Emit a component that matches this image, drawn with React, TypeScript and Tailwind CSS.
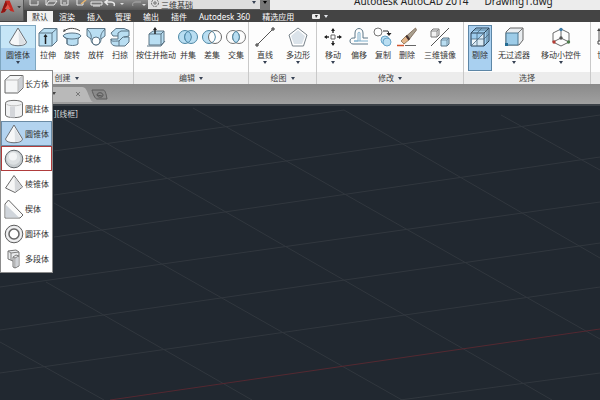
import type { ReactNode } from "react";

const EDGE = "#5b7485";
const BLUE = "#b9def2";

const Svg = ({ children }: { children: ReactNode }) => (
  <svg viewBox="0 0 20 20" className="h-5 w-5 shrink-0" fill="none" strokeWidth="1" strokeLinejoin="round">
    {children}
  </svg>
);

const Caret = ({ className = "text-gray-700" }: { className?: string }) => (
  <svg viewBox="0 0 4 3" className={`h-[3px] w-1 shrink-0 ${className}`} fill="currentColor">
    <path d="M0 0h4L2 3z" />
  </svg>
);

/* solids */
const ConeIcon = () => (
  <Svg>
    <path d="M10 1 1.500 15c0 5 17 5 17 0z" fill="#f6f7f8" stroke="#6a6f75" />
    <path d="M10.500 4 11 18c3.500 0 6-1.200 6.500-2.500z" fill="#dde1e5" />
  </Svg>
);
const BoxIcon = () => (
  <Svg>
    <path d="M1 6 6 1.500h13V14l-5 5H1z" fill="#f4f5f6" stroke="#666" />
    <path d="M14 6.500 18.500 2v12L14 18.500z" fill="#cdd0d5" />
    <path d="M1.500 6H14v12.500M14 6l4.500-4" stroke="#bbb" />
  </Svg>
);
const CylinderIcon = () => (
  <Svg>
    <path d="M1.500 4c0-3.500 17-3.500 17 0v12c0 3.500-17 3.500-17 0z" fill="#f1f2f3" stroke="#6d6d6d" />
    <path d="M6 7.500h5v11H6z" fill="#d4d6da" />
    <path d="M2 4.500c1 3 15 3 16 0" stroke="#c2c2c2" />
  </Svg>
);
const SphereIcon = () => (
  <Svg>
    <circle cx="10" cy="10" r="8.800" fill="#c7cccf" stroke="#62686c" />
    <circle cx="9.500" cy="9" r="6.800" fill="#dde1e3" />
    <circle cx="9" cy="7.500" r="4" fill="#f3f5f6" />
  </Svg>
);
const PyramidIcon = () => (
  <Svg>
    <path d="M10 1.500 1.500 14 11 18.500l7.500-5.500z" fill="#f6f6f6" stroke="#6a6a6a" />
    <path d="M10.500 3 11 18l7-5z" fill="#d5d7da" />
  </Svg>
);
const WedgeIcon = () => (
  <Svg>
    <path d="M1 5 4.500 1 19 16l-3 3H1z" fill="#fafafa" stroke="#666" />
    <path d="M1.500 5.500 15 18.500H1.500z" fill="#d0d5db" />
  </Svg>
);
const TorusIcon = () => (
  <Svg>
    <circle cx="10" cy="10" r="8.800" fill="#e5e6e8" stroke="#5e5e5e" />
    <circle cx="10" cy="10" r="5" fill="#fff" stroke="#666" strokeWidth="1.500" />
    <circle cx="10" cy="10" r="7" stroke="#f6f6f6" />
  </Svg>
);
const PolysolidIcon = () => (
  <Svg>
    <path d="m4 2 8-1 3 2v14l-4 2-2-1v-6l-5-2z" fill="#e9ebec" stroke="#777" />
    <path d="m4 2 3 2v7M7 4l8-1M9 12V8l3-2 3 1M11 19V9L9 8M11 9l4-2" stroke="#808080" />
    <path d="m11.500 9.500 3-1.500v8.500l-3 1.500z" fill="#cfd2d6" />
  </Svg>
);

/* ribbon tools */
const ExtrudeIcon = () => (
  <Svg>
    <path d="M1 6 6 1.500h13V14l-5 5H1z" fill={BLUE} stroke={EDGE} />
    <path d="M1 6h13v13M14 6l5-4.500" stroke={EDGE} />
    <path d="M7.500 17V8" stroke="#222" strokeWidth="1.500" />
    <path d="M5.500 10h4l-2-3z" fill="#222" />
  </Svg>
);
const RevolveIcon = () => (
  <Svg>
    <path d="M1 9c1-4 17-4 18 0l-3 3v5c-2 2-9 2-11 0v-5z" fill={BLUE} stroke={EDGE} />
    <path d="M1 9c2 4 16 4 18 0M5 12v5" stroke={EDGE} />
    <path d="M2 4C7 0 14 1 18 4" stroke="#444" />
    <path d="m1 5 1-3 2 2z" fill="#444" />
  </Svg>
);
const LoftIcon = () => (
  <Svg>
    <path d="M1 1.500h18V9l-4 3c0 8-10 8-10 0L1 9z" fill={BLUE} stroke={EDGE} />
    <path d="M1 2c3 3 5 6 4 10M19 2c-3 3-5 6-4 10" stroke={EDGE} />
    <circle cx="10" cy="14" r="4" fill="#fff" stroke={EDGE} />
  </Svg>
);
const SweepIcon = () => (
  <Svg>
    <path d="M6 1.500h8l5 2V9l-5 1h5v5l-4 4H6c-3 0-5-2-5-4v-3h7V9H3L1 6z" fill={BLUE} stroke={EDGE} />
    <path d="M8 9V6l3-2h8M1 12c0 3 3 2 8 2v5M9 14l4-4h1" stroke={EDGE} />
  </Svg>
);
const PressPullIcon = () => (
  <Svg>
    <path d="m3 7 4-3h11v11l-3 3H3z" fill={BLUE} stroke={EDGE} />
    <path d="M3 7h12v11M15 7l3-3M1 19h14l4-5" stroke={EDGE} />
    <path d="M9 7V2" stroke="#222" strokeWidth="1.500" />
    <path d="M7 3h4L9 0z" fill="#222" />
  </Svg>
);
const UnionIcon = () => (
  <Svg>
    <circle cx="7" cy="10" r="6.500" fill={BLUE} stroke="#4e87a4" />
    <circle cx="13" cy="10" r="6.500" fill={BLUE} stroke="#4e87a4" />
    <path d="M10 4.300a6.500 6.500 0 0 1 0 11.400a6.500 6.500 0 0 1 0-11.400z" fill="#a4d2ec" stroke="#4e87a4" />
  </Svg>
);
const SubtractIcon = () => (
  <Svg>
    <circle cx="7" cy="10" r="6.500" fill={BLUE} stroke="#4e87a4" />
    <circle cx="13" cy="10" r="6.500" fill="#fff" stroke="#666" />
    <path d="M10 4.300a6.500 6.500 0 0 1 0 11.400" stroke="#4e87a4" />
  </Svg>
);
const IntersectIcon = () => (
  <Svg>
    <circle cx="7" cy="10" r="6.500" stroke="#777" />
    <circle cx="13" cy="10" r="6.500" stroke="#777" />
    <path d="M10 4.300a6.500 6.500 0 0 1 0 11.400a6.500 6.500 0 0 1 0-11.400z" fill={BLUE} stroke="#4e87a4" />
  </Svg>
);
const LineIcon = () => (
  <Svg>
    <path d="M2 18 18 2" stroke="#555" />
    <path d="M1 17h2v2H1zM17 1h2v2h-2z" fill="#fff" stroke="#333" />
  </Svg>
);
const PolygonIcon = () => (
  <Svg>
    <path d="m10 1 9 7-3.500 11h-11L1 8z" fill="#fff" stroke="#78828a" />
    <path d="m10 3 7 6-3 8H6L3 9z" fill="#dbe3ea" />
  </Svg>
);
const MoveIcon = () => (
  <Svg>
    <path d="M8 8h4v4H8z" fill="#fff" stroke="#666" />
    <path d="M10 2v4M10 14v4M2 10h4M14 10h4" stroke="#333" strokeWidth="1.500" />
    <path d="m8 4 2-3 2 3zM8 16l2 3 2-3zM4 8l-3 2 3 2zM16 8l3 2-3 2z" fill="#222" />
  </Svg>
);
const OffsetIcon = () => (
  <Svg>
    <path d="M19 17H4c-4 0-4-6 0-6h2V6c0-6 8-6 8 0v5h5" stroke="#5d7787" />
    <path d="M19 14H5h4V6c0-1 2-1 2 0v8" stroke="#7fb0cd" />
  </Svg>
);
const CopyIcon = () => (
  <Svg>
    <circle cx="5" cy="5" r="4" fill="#fff" stroke="#777" />
    <circle cx="12" cy="13" r="4" fill={BLUE} stroke="#69a5c9" />
    <circle cx="14" cy="15" r="4" fill={BLUE} stroke="#69a5c9" />
    <path d="M10 4h5l1 3" stroke="#333" />
    <path d="M13.500 6h5L16 9z" fill="#222" />
  </Svg>
);
const EraseIcon = () => (
  <Svg>
    <path d="m18.500 1-9 8 3 3 7-9z" fill="#a9a08f" stroke="#6b5340" strokeWidth=".7" />
    <path d="m10 8-6 6 3 3 6-5z" fill="#e3b58a" stroke="#77603f" strokeWidth=".7" />
    <path d="m8.500 9.500 3 4 1.500-1.500-3-4z" fill="#433" />
    <path d="M0 18.500h7" stroke="#d2552f" strokeWidth="1.500" />
    <path d="M8 18.500h11" stroke="#666" />
  </Svg>
);
const MirrorIcon = () => (
  <Svg>
    <path d="m1 4 2-2h6v6L7 10H1z" fill="#f1f1f1" stroke="#777" />
    <path d="M1 4h6v6M7 4l2-2" stroke="#888" />
    <path d="m11 13 2-2h6v6l-2 2h-6z" fill={BLUE} stroke={EDGE} />
    <path d="M11 13h6v6M17 13l2-2" stroke={EDGE} strokeWidth=".7" />
    <path d="M19 1 1 19" stroke="#555" />
  </Svg>
);
const CullIcon = () => (
  <Svg>
    <path d="M1 6 6 1h13v13l-5 5H1z" fill="#9ecdee" />
    <path d="M2 12h11v6H2z" fill="#f0f7fb" />
    <path d="M1 19 14 6v13z" fill="#dbeaf4" />
    <path d="M1 6 6 1h13v13l-5 5H1zM1 6h13v13M14 6l5-5" stroke="#2c4356" />
    <path d="M7 6v13M7 6l5-5M1 12h13l5-5M4 3h13v13M1 19 14 6" stroke="#47677e" strokeWidth=".8" />
  </Svg>
);
const FilterIcon = () => (
  <Svg>
    <path d="M2 5 6 1h13v12l-4 5H2z" fill="#e9edf0" stroke="#666" />
    <path d="M2 6h12v12H2z" fill="#9dcce8" stroke="#4c7892" />
    <path d="m14 6 5-5" stroke="#777" />
    <path d="M1 16h3v3H1z" fill="#246c93" />
  </Svg>
);
const GizmoIcon = () => (
  <Svg>
    <path d="m10 2 8 4v9l-8 4-8-4V6zM10 2v9l-8 4M10 11l8 4" stroke="#6b6b6b" />
    <circle cx="10" cy="2.500" r="1.700" fill="#3d7ca8" />
    <circle cx="10" cy="11" r="1.700" fill="#555" />
    <circle cx="3" cy="15" r="1.700" fill="#b33b34" />
    <circle cx="17.500" cy="15" r="1.700" fill="#4c7b4b" />
  </Svg>
);
const UcsIcon = () => (
  <Svg>
    <path d="M4 3v12h12M4 15l8-8" stroke="#555" />
    <path d="M2 4h4L4 1z" fill="#444" />
    <path d="M3 14h3v3H3z" fill="#fff" stroke="#444" />
  </Svg>
);

type Tool = { label: string; icon: () => ReactNode; width: string; menu?: boolean; on?: boolean };
type Group = { title: string; menu?: boolean; className: string; tools: Tool[] };

const groups: Group[] = [
  {
    title: "编辑",
    menu: true,
    className: "pl-0.5",
    tools: [
      { label: "按住并拖动", icon: PressPullIcon, width: "w-10" },
      { label: "并集", icon: UnionIcon, width: "w-6" },
      { label: "差集", icon: SubtractIcon, width: "w-6" },
      { label: "交集", icon: IntersectIcon, width: "w-6" },
    ],
  },
  {
    title: "绘图",
    menu: true,
    className: "pr-px",
    tools: [
      { label: "直线", icon: LineIcon, width: "w-8", menu: true },
      { label: "多边形", icon: PolygonIcon, width: "w-[34px]", menu: true },
    ],
  },
  {
    title: "修改",
    menu: true,
    className: "px-0.5",
    tools: [
      { label: "移动", icon: MoveIcon, width: "w-7", menu: true },
      { label: "偏移", icon: OffsetIcon, width: "w-6" },
      { label: "复制", icon: CopyIcon, width: "w-6" },
      { label: "删除", icon: EraseIcon, width: "w-6" },
      { label: "三维镜像", icon: MirrorIcon, width: "w-[42px]", menu: true },
    ],
  },
  {
    title: "选择",
    className: "px-1",
    tools: [
      { label: "剔除", icon: CullIcon, width: "w-6", on: true },
      { label: "无过滤器", icon: FilterIcon, width: "w-11", menu: true },
      { label: "移动小控件", icon: GizmoIcon, width: "w-[50px]", menu: true },
    ],
  },
  {
    title: "",
    className: "",
    tools: [{ label: "世界", icon: UcsIcon, width: "w-7" }],
  },
];

const createTools: Tool[] = [
  { label: "拉伸", icon: ExtrudeIcon, width: "w-6" },
  { label: "旋转", icon: RevolveIcon, width: "w-6" },
  { label: "放样", icon: LoftIcon, width: "w-6" },
  { label: "扫掠", icon: SweepIcon, width: "w-6" },
];

const solids = [
  { label: "长方体", icon: BoxIcon },
  { label: "圆柱体", icon: CylinderIcon },
  { label: "圆锥体", icon: ConeIcon },
  { label: "球体", icon: SphereIcon },
  { label: "棱锥体", icon: PyramidIcon },
  { label: "楔体", icon: WedgeIcon },
  { label: "圆环体", icon: TorusIcon },
  { label: "多段体", icon: PolysolidIcon },
];

const tabs = ["默认", "渲染", "插入", "管理", "输出", "插件", "Autodesk 360", "精选应用"];

const ToolButton = ({ label, icon: Icon, width, menu, on }: Tool) => (
  <button
    type="button"
    className={`flex h-[46px] shrink-0 flex-col items-center border pt-px whitespace-nowrap ${width} ${
      on ? "border-[#5d86a6] bg-[#a9d0f0]" : "border-transparent"
    }`}
  >
    <Icon />
    <span className="mt-[3px] leading-[10px]">{label}</span>
    {menu && (
      <span className="mt-px">
        <Caret />
      </span>
    )}
  </button>
);

const Panel = ({ title, menu, className, children }: { title: string; menu?: boolean; className: string; children: ReactNode }) => (
  <section className="flex shrink-0 flex-col border-r border-[#c9c9c9]">
    <div className={`flex h-[50px] items-start pt-[3px] ${className}`}>{children}</div>
    <h2 className="flex h-3 items-center justify-center gap-1 bg-[#ececec] leading-3 text-[#444]">
      {title}
      {menu && <Caret />}
    </h2>
  </section>
);

const QuickAccess = () => (
  <svg viewBox="0 0 122 10" className="h-[10px] w-[122px] shrink-0" fill="none" stroke="#e8e8e8">
    <path d="M6 0v5h8V1M22 0v5h8l3-4h-8l-3 4M37 0v5h7V0M39 3h3M53 0v5h6V2M67 2h11v3H67zM69 6h7" />
    <path d="m57 4 5-4" stroke="#e5b36c" strokeWidth="1.500" />
    <path d="M82 2h5c3 0 4 2 3 4M84 0l-3 2 3 3" strokeWidth="1.500" />
    <path d="M117 2h-5c-3 0-4 2-3 4" stroke="#aaa" />
    <path d="M96 3h4l-2 2zM118 4h4l-2 2z" fill="#ddd" stroke="none" />
  </svg>
);

const Header = () => (
  <header className="flex h-[22px] bg-[#444]">
    <button
      type="button"
      aria-label="A"
      className="flex h-[21px] w-6 shrink-0 items-start border-r border-[#555] bg-linear-to-b from-[#a2a2a2] to-[#6c6c6c]"
    >
      <svg viewBox="0 0 24 20" className="h-5 w-6">
        <path d="M6 0h4l5 12-4-1-3-3-3 4-4 1z" fill="#c42a22" />
        <path d="M6 0 1 13l4-1 3-6z" fill="#8f1512" />
        <path d="m8 4 3 5H5z" fill="#e0564a" />
        <path d="M18 6h4l-2 2z" fill="#222" />
      </svg>
    </button>
    <div className="flex min-w-0 flex-1 flex-col">
      <div className="flex h-[10px] overflow-hidden bg-linear-to-b from-[#8b8b8b] to-[#555]">
        <QuickAccess />
        <div className="relative ml-0.5 h-[9px] w-28 shrink-0 bg-[#dedede]">
          <select
            aria-label="工作空间"
            className="block h-[9px] w-full appearance-none pl-[13px] leading-[9px] text-[#333]"
          >
            <option>三维基础</option>
          </select>
          <svg viewBox="0 0 10 8" className="pointer-events-none absolute top-0 left-0.5 h-2 w-[10px]" fill="none" stroke="#666">
            <circle cx="5" cy="3" r="3.500" strokeDasharray="2 1" />
            <circle cx="5" cy="3" r="1.200" />
          </svg>
          <span className="pointer-events-none absolute top-px right-1 flex">
            <Caret />
          </span>
        </div>
        <button type="button" aria-label="▾" className="flex w-[10px] shrink-0 justify-center bg-[#777] pt-px">
          <Caret className="text-black" />
        </button>
        <div className="flex flex-1 items-end gap-4 bg-[#ececec] pb-[3px] pl-[84px] text-[10px] leading-3 whitespace-nowrap text-[#222]">
          <span>Autodesk AutoCAD 2014</span>
          <span>Drawing1.dwg</span>
        </div>
      </div>
      <nav className="flex h-3 items-end pl-[3px] whitespace-nowrap text-white">
        {tabs.map((tab, i) => (
          <button
            type="button"
            key={tab}
            className={i === 0 ? "h-[11px] w-[26px] bg-[#f1f1f1] leading-[11px] text-[#333]" : "h-[11px] px-[6px] leading-[11px]"}
          >
            {tab}
          </button>
        ))}
        <button type="button" aria-label="▾" className="ml-3 flex h-[11px] items-center gap-1">
          <svg viewBox="0 0 8 5" className="h-[5px] w-2">
            <rect width="8" height="5" rx="1" fill="#eee" />
            <path d="M3 1h3L4 4z" fill="#333" />
          </svg>
          <Caret className="text-gray-200" />
        </button>
      </nav>
    </div>
  </header>
);

const SolidMenu = () => (
  <div className="absolute top-[70px] left-0 z-10 flex w-[53px] flex-col border border-[#8c8c8c] bg-white pb-px">
    {solids.map(({ label, icon: Icon }) => (
      <button
        type="button"
        key={label}
        className={`flex h-[25px] items-center gap-px border pl-0.5 whitespace-nowrap ${
          label === "圆锥体"
            ? "border-[#6b8ba5] bg-[#b3d3ef]"
            : label === "球体"
              ? "border-[#b03c3c]"
              : "border-transparent"
        }`}
      >
        <Icon />
        {label}
      </button>
    ))}
  </div>
);

const Viewport = () => (
  <main className="relative flex-1 overflow-hidden bg-[#212830]">
    <svg viewBox="0 106 600 294" preserveAspectRatio="xMinYMin slice" className="absolute inset-0 h-full w-full" fill="none">
      <path
        d="M501 115 600 170M344 110 600 258M193 108 600 339M54 113 552 400M54 203 402 400M46 282 252 400M0 342 104 400"
        stroke="#31373e"
      />
      <path
        d="M54 151 344 110M54 195 600 115M54 237 600 157M0 287 600 202M0 330 600 243M0 373 600 287M400 400 600 373"
        stroke="#31373e"
      />
      <path d="M110 400 600 329" stroke="#542831" />
    </svg>
    <p className="relative pt-[3px] pl-[54px] leading-[10px] text-[#d5d8da]">][线框]</p>
  </main>
);

export default function App() {
  return (
    <div className="relative flex h-screen flex-col overflow-hidden bg-white font-['Noto_Sans','Noto_Sans_CJK_SC',sans-serif] text-[8px] text-[#333]">
      <Header />
      <div className="flex h-[62px] overflow-hidden bg-[#fdfdfd]">
        <Panel title="创建" menu className="pr-px">
          <button
            type="button"
            className="flex h-[47px] w-9 flex-col items-center border border-[#7ea6c0] bg-linear-to-b from-[#c6e6f7] from-50% to-[#a6cdec] to-50% pt-px"
          >
            <ConeIcon />
            <span className="mt-[3px] leading-[10px]">圆锥体</span>
            <span className="mt-px">
              <Caret />
            </span>
          </button>
          {createTools.map((tool) => (
            <ToolButton key={tool.label} {...tool} />
          ))}
        </Panel>
        {groups.map(({ tools, ...group }) => (
          <Panel key={group.title} {...group}>
            {tools.map((tool) => (
              <ToolButton key={tool.label} {...tool} />
            ))}
          </Panel>
        ))}
      </div>
      <div className="flex h-[22px] items-start border-b-2 border-[#3c4248] bg-linear-to-b from-[#8a8a8a] to-[#a0a0a0] pt-[3px]">
        <svg viewBox="0 0 110 15" className="h-[15px] w-[110px]" fill="none">
          <path d="M0 0h82c4 0 5 4 7 9s3 6 5 6H0z" fill="#b9b9b9" />
          <path d="M52 5h4l-2 3z" fill="#444" />
          <path d="m76 5 4 4M80 5l-4 4" stroke="#777" />
          <path d="M92 3h11c2 0 3 3 4 9H97c-2 0-4-5-5-9z" fill="#8a8a8a" stroke="#5d5d5d" />
          <path d="M97 8c0-3 6-3 6 0s-5 3-6 0l5 1" stroke="#555" />
        </svg>
      </div>
      <Viewport />
      <SolidMenu />
    </div>
  );
}
